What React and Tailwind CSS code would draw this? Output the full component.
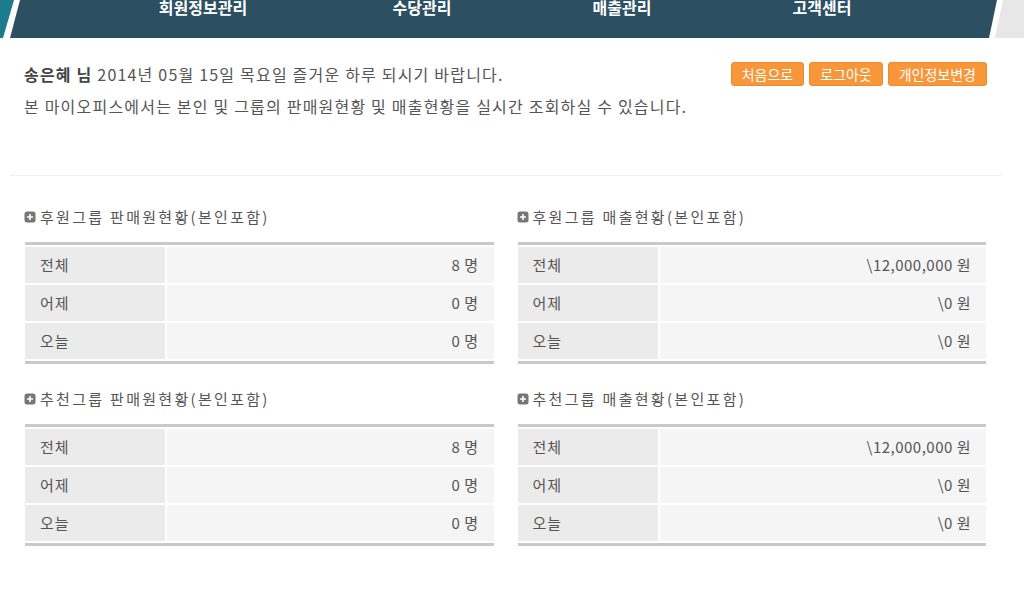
import React from 'react';

const font = { fontFamily: '"Noto Sans CJK KR", "Noto Sans", sans-serif' };

const navItems = ['회원정보관리', '수당관리', '매출관리', '고객센터'];

const sections = [
  [
    { title: '후원그룹 판매원현황(본인포함)', rows: [['전체', '8 명'], ['어제', '0 명'], ['오늘', '0 명']] },
    { title: '후원그룹 매출현황(본인포함)', rows: [['전체', '\\12,000,000 원'], ['어제', '\\0 원'], ['오늘', '\\0 원']] },
  ],
  [
    { title: '추천그룹 판매원현황(본인포함)', rows: [['전체', '8 명'], ['어제', '0 명'], ['오늘', '0 명']] },
    { title: '추천그룹 매출현황(본인포함)', rows: [['전체', '\\12,000,000 원'], ['어제', '\\0 원'], ['오늘', '\\0 원']] },
  ],
];

function PlusIcon() {
  return (
    <svg width="12" height="12" viewBox="0 0 12 12" className="shrink-0">
      <rect x="0.5" y="0.5" width="11" height="11" rx="2.5" fill="#777" />
      <path d="M6 3v6M3 6h6" stroke="#fff" strokeWidth="1.6" />
    </svg>
  );
}

function StatBox({ title, rows }) {
  return (
    <div>
      <div className="flex items-center gap-[4px] h-[20px] mb-[15px] -ml-[1px]">
        <PlusIcon />
        <span className="text-[15px] tracking-[2.3px] text-[#555]">{title}</span>
      </div>
      <div className="border-t-[3px] border-b-[3px] border-[#c9c9c9] py-[2px] flex flex-col gap-[2px]">
        {rows.map(([label, value]) => (
          <div key={label} className="flex h-[36px] gap-[2px]">
            <div className="w-[140px] bg-[#ebebeb] flex items-center pl-[15px] text-[15px] tracking-[1px] text-[#555]">{label}</div>
            <div className="flex-1 bg-[#f5f5f5] flex items-center justify-end pr-[15px] text-[15px] tracking-[0.5px] text-[#555]">{value}</div>
          </div>
        ))}
      </div>
    </div>
  );
}

export default function App() {
  return (
    <div className="w-[1024px] h-[602px] bg-white overflow-hidden" style={font}>
      <div className="relative h-[38px] flex flex-col">
        <svg className="absolute inset-0" width="1024" height="38" viewBox="0 0 1024 38">
          <polygon points="0,0 14,0 3,38 0,38" fill="#1b7c8f" />
          <polygon points="20,0 997,0 989,38 10,38" fill="#2c4f62" />
          <polygon points="1003,0 1024,0 1024,38 995,38" fill="#e7e7e7" />
        </svg>
        <div className="relative flex pl-[103px] -mt-[5px]">
          {navItems.map((item, i) => (
            <div key={item} className={`w-[200px] text-center text-[16px] font-bold text-white leading-[24px] ${i === 1 ? 'ml-[19px]' : ''}`}>
              {item}
            </div>
          ))}
        </div>
      </div>

      <div className="flex justify-between pl-[24px] pr-[37px] pt-[20px]">
        <div className="text-[16px] tracking-[1.2px] text-[#555] leading-[32px]">
          <p><b className="text-[#444]">송은혜 님</b> 2014년 05월 15일 목요일 즐거운 하루 되시기 바랍니다.</p>
          <p>본 마이오피스에서는 본인 및 그룹의 판매원현황 및 매출현황을 실시간 조회하실 수 있습니다.</p>
        </div>
        <div className="flex gap-[5px] h-[24px] mt-[4px]">
          {['처음으로', '로그아웃', '개인정보변경'].map((b) => (
            <button key={b} className="px-[10px] h-[24px] rounded-[3px] bg-[#f8963a] border border-[#ef8a2e] text-white text-[14px] leading-[22px]">
              {b}
            </button>
          ))}
        </div>
      </div>

      <div className="mx-[10px] mr-[22px] mt-[53px] border-t border-[#eeeeee]" />

      <div className="pl-[25px] w-[986px] pt-[31px] flex flex-col gap-[25px]">
        {sections.map((pair, i) => (
          <div key={i} className="grid grid-cols-2 gap-[24px]">
            {pair.map((s) => (
              <StatBox key={s.title} {...s} />
            ))}
          </div>
        ))}
      </div>
    </div>
  );
}
